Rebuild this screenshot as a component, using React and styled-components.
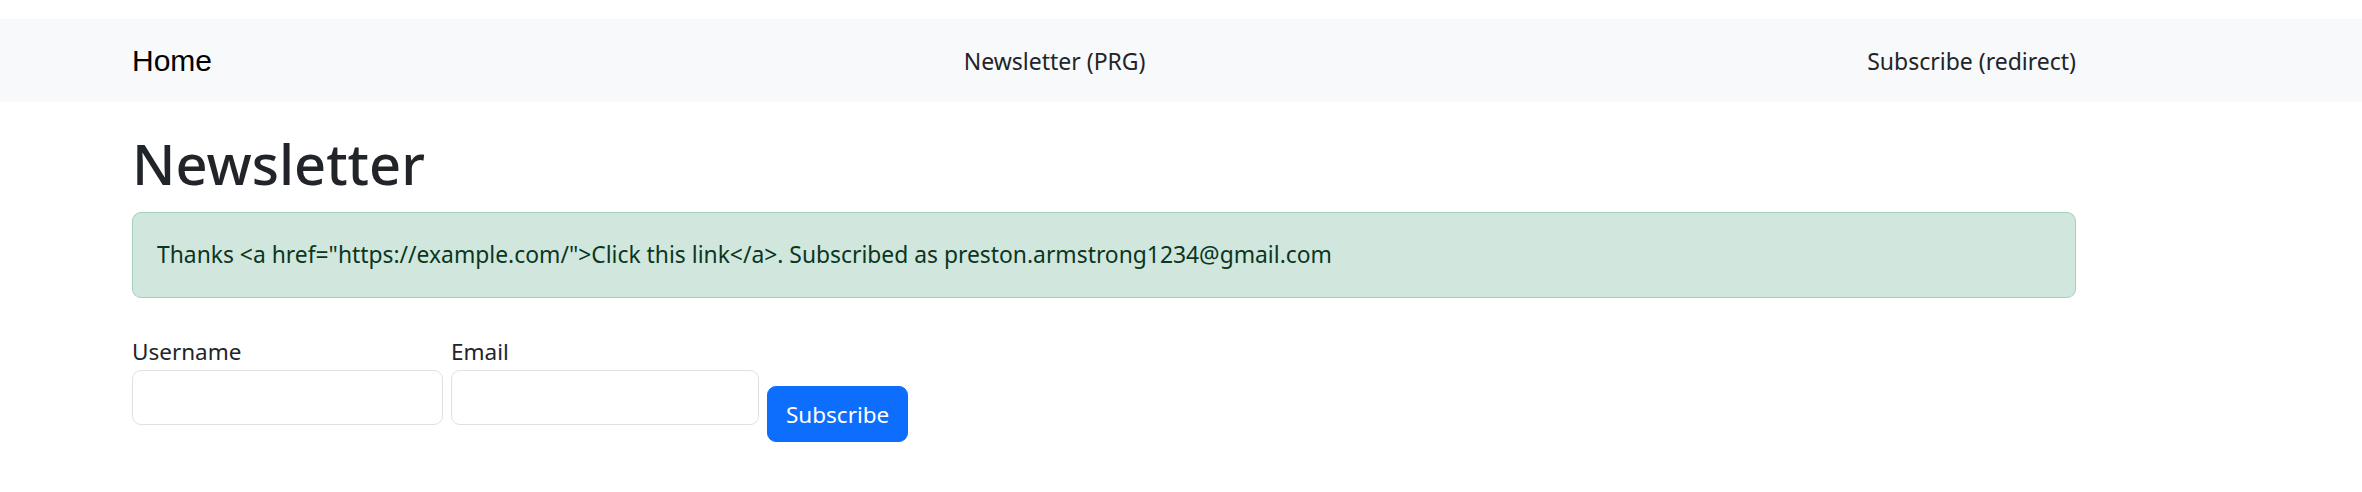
import React from "react";
import styled, { createGlobalStyle } from "styled-components";

const GlobalStyle = createGlobalStyle`
    body {
        margin: 0;
        background: #ffffff;
        color: #212529;
        font-family: "Noto Sans", "Open Sans", sans-serif;
    }
`;

export default function App() {
    return (
        <>
            <GlobalStyle />
            <Page>
                <Navbar>
                    <Container>
                        <NavRow>
                            <Brand>Home</Brand>
                            <NavLink $offset={30}>Newsletter (PRG)</NavLink>
                            <NavLink>Subscribe (redirect)</NavLink>
                        </NavRow>
                    </Container>
                </Navbar>
                <Container>
                    <Title>Newsletter</Title>
                    <Alert>
                        Thanks {'<a href="https://example.com/">Click this link</a>'}. Subscribed as preston.armstrong1234@gmail.com
                    </Alert>
                    <Form>
                        <Field>
                            <Label>Username</Label>
                            <Input w={311} />
                        </Field>
                        <Field>
                            <Label>Email</Label>
                            <Input w={308} />
                        </Field>
                        <Button>Subscribe</Button>
                    </Form>
                </Container>
            </Page>
        </>
    );
}

const Page = styled.div`
    padding-top: 19px;
`;

const Navbar = styled.nav`
    background: #f8f9fa;
    height: 83px;
    display: flex;
    align-items: center;
`;

const Container = styled.div`
    width: 1944px;
    margin-left: 132px;
`;

const NavRow = styled.div`
    display: flex;
    justify-content: space-between;
    align-items: center;
`;

const Brand = styled.a`
    font-family: "Liberation Sans", Arial, sans-serif;
    font-size: 30px;
    color: #000000;
`;

const NavLink = styled.a`
    margin-left: ${(p) => p.$offset || 0}px;
    font-size: 23px;
    color: #212529;
`;

const Title = styled.h1`
    margin: 28px 0 15px;
    font-size: 56px;
    font-weight: 500;
    line-height: 1.2;
    color: #212529;
`;

const Alert = styled.div`
    padding: 24px;
    line-height: 36px;
    font-size: 22.85px;
    color: #0a3622;
    background: #d1e7dd;
    border: 1px solid #a3cfbb;
    border-radius: 9px;
`;

const Form = styled.form`
    display: flex;
    align-items: flex-start;
    gap: 8px;
    margin-top: 36px;
`;

const Field = styled.div`
    display: flex;
    flex-direction: column;
`;

const Label = styled.label`
    font-size: 22.5px;
    line-height: 36px;
    color: #212529;
`;

const Input = styled.input`
    box-sizing: border-box;
    width: ${(p) => p.w}px;
    height: 55px;
    border: 1px solid #dee2e6;
    border-radius: 9px;
    background: #ffffff;
`;

const Button = styled.button`
    margin-top: 52px;
    height: 56px;
    padding: 0 18px;
    font-family: "Noto Sans", sans-serif;
    font-size: 22.5px;
    color: #ffffff;
    background: #0d6efd;
    border: 1px solid #0d6efd;
    border-radius: 9px;
`;
